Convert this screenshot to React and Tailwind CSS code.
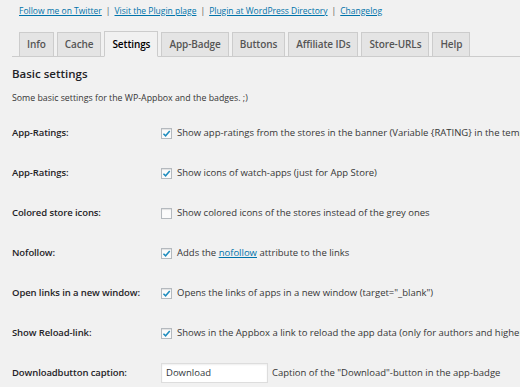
import React from 'react';

const tabs = ['Info', 'Cache', 'Settings', 'App-Badge', 'Buttons', 'Affiliate IDs', 'Store-URLs', 'Help'];

function Check({ on }) {
  return (
    <span className="w-[11px] h-[11px] shrink-0 border border-[#b4b9be] bg-[#fbfbfb] shadow-[inset_0_1px_1px_rgba(0,0,0,0.1)] flex items-center justify-center">
      {on && (
        <svg width="9" height="9" viewBox="0 0 10 10">
          <path d="M1.6 5.2 L4 7.6 L8.6 2.2" fill="none" stroke="#1e8cbe" strokeWidth="1.7" />
        </svg>
      )}
    </span>
  );
}

function Row({ label, children }) {
  return (
    <div className="h-[40px] flex items-center">
      <div className="w-[149px] shrink-0 font-semibold text-[#1f2327] tracking-[-0.1px]">{label}</div>
      <div className="flex items-center whitespace-nowrap">{children}</div>
    </div>
  );
}

export default function App() {
  return (
    <div
      className="w-[520px] h-[387px] overflow-hidden bg-[#f1f1f1] text-[9.5px] text-[#363636] pl-[12px]"
      style={{ fontFamily: '"Open Sans", "Noto Sans", sans-serif' }}
    >
      {/* plugin links */}
      <div className="h-[22px] flex items-center pl-[7px] whitespace-nowrap text-[8.5px] text-[#555]">
        <a className="text-[#0073aa] underline">Follow me on Twitter</a>
        <span className="mx-[4px]">|</span>
        <a className="text-[#0073aa] underline">Visit the Plugin plage</a>
        <span className="mx-[4px]">|</span>
        <a className="text-[#0073aa] underline">Plugin at WordPress Directory</a>
        <span className="mx-[4px]">|</span>
        <a className="text-[#0073aa] underline">Changelog</a>
      </div>

      {/* tabs */}
      <div className="mt-[10px] h-[25px] flex items-end gap-[3px] pl-[7px] border-b border-[#ccc]">
        {tabs.map((t) => (
          <div
            key={t}
            className={
              t === 'Settings'
                ? 'h-[26px] -mb-px px-[7px] flex items-center border border-[#ccc] border-b-[#f1f1f1] bg-[#f1f1f1] text-[10px] font-semibold tracking-[-0.1px] text-black'
                : 'h-[25px] -mb-px px-[7px] flex items-center border border-[#ccc] bg-[#e4e4e4] text-[10px] font-semibold tracking-[-0.1px] text-[#555]'
            }
          >
            {t}
          </div>
        ))}
      </div>

      <div className="h-[34px] flex items-center text-[11.5px] font-semibold text-[#1f2327]">Basic settings</div>
      <div className="h-[16px] flex items-center text-[8.8px]">Some basic settings for the WP-Appbox and the badges. ;)</div>

      <div className="mt-[6px]">
        <Row label="App-Ratings:">
          <Check on />
          <span className="ml-[5px]">Show app-ratings from the stores in the banner (Variable {'{RATING}'} in the template)</span>
        </Row>
        <Row label="App-Ratings:">
          <Check on />
          <span className="ml-[5px]">Show icons of watch-apps (just for App Store)</span>
        </Row>
        <Row label="Colored store icons:">
          <Check />
          <span className="ml-[5px]">Show colored icons of the stores instead of the grey ones</span>
        </Row>
        <Row label="Nofollow:">
          <Check on />
          <span className="ml-[5px]">
            Adds the <a className="text-[#0073aa] underline">nofollow</a> attribute to the links
          </span>
        </Row>
        <Row label="Open links in a new window:">
          <Check on />
          <span className="ml-[5px]">Opens the links of apps in a new window (target="_blank")</span>
        </Row>
        <Row label="Show Reload-link:">
          <Check on />
          <span className="ml-[5px]">Shows in the Appbox a link to reload the app data (only for authors and higher)</span>
        </Row>
        <Row label="Downloadbutton caption:">
          <div className="w-[107px] h-[20px] bg-white border border-[#ddd] shadow-[inset_0_1px_2px_rgba(0,0,0,0.07)] flex items-center px-[4px] text-[#32373c]">
            Download
          </div>
          <span className="ml-[4px]">Caption of the "Download"-button in the app-badge</span>
        </Row>
      </div>
    </div>
  );
}
